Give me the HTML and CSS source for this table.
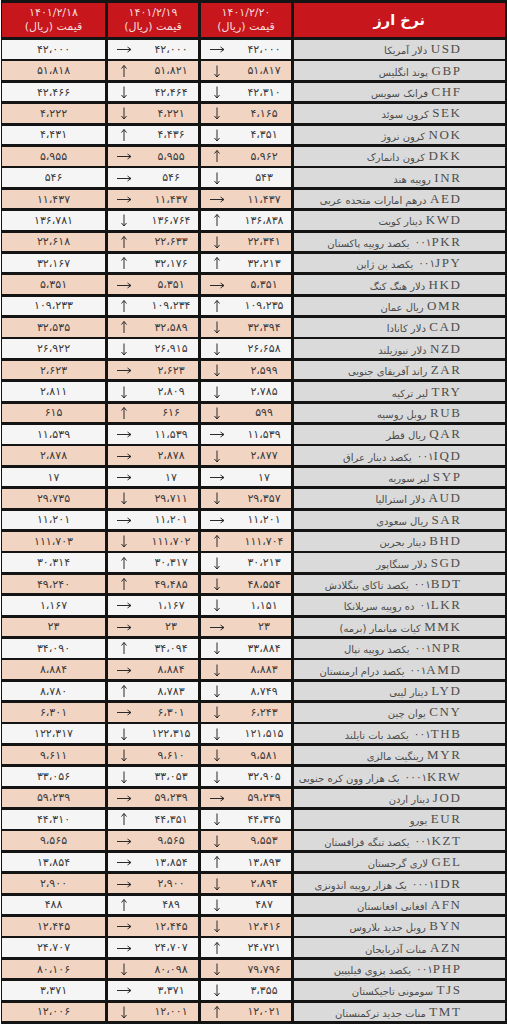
FILE: index.html
```html
<!DOCTYPE html>
<html lang="fa" dir="rtl">
<head>
<meta charset="utf-8">
<title>نرخ ارز</title>
<link rel="stylesheet" href="styles.css">
</head>
<body>
<svg class="defs" width="0" height="0" aria-hidden="true">
  <symbol id="a-r" viewBox="0 0 16 16"><path d="M1 8.5H15M11.5 6L15 8.5L11.5 11"/></symbol>
  <symbol id="a-u" viewBox="0 0 16 16"><path d="M8 14V2.5M5.5 5.5L8 2.5L10.5 5.5"/></symbol>
  <symbol id="a-d" viewBox="0 0 16 16"><path d="M8 2.5V14M5.5 11L8 14L10.5 11"/></symbol>
</svg>
<main class="rates" id="rates">
  <div class="hd hd-name">نرخ ارز</div>
  <div class="hd hd-date"><span class="dt">۱۴۰۱/۲/۲۰</span><span>قیمت (ریال)</span></div>
  <div class="hd hd-date"><span class="dt">۱۴۰۱/۲/۱۹</span><span>قیمت (ریال)</span></div>
  <div class="hd hd-date"><span class="dt">۱۴۰۱/۲/۱۸</span><span>قیمت (ریال)</span></div>
</main>
<script src="app.js"></script>
</body>
</html>
```
FILE: app.js
```javascript
const data = [
  ["USD","","دلار آمریکا","r","۴۲،۰۰۰","r","۴۲،۰۰۰","۴۲،۰۰۰"],
  ["GBP","","پوند انگلیس","d","۵۱،۸۱۷","u","۵۱،۸۲۱","۵۱،۸۱۸"],
  ["CHF","","فرانک سویس","d","۴۲،۳۱۰","d","۴۲،۴۶۴","۴۲،۴۶۶"],
  ["SEK","","کرون سوئد","d","۴،۱۶۵","d","۴،۲۲۱","۴،۲۲۲"],
  ["NOK","","کرون نروژ","d","۴،۳۵۱","u","۴،۴۳۶","۴،۴۳۱"],
  ["DKK","","کرون دانمارک","u","۵،۹۶۲","r","۵،۹۵۵","۵،۹۵۵"],
  ["INR","","روپیه هند","d","۵۴۳","r","۵۴۶","۵۴۶"],
  ["AED","","درهم امارات متحده عربی","r","۱۱،۴۳۷","r","۱۱،۴۳۷","۱۱،۴۳۷"],
  ["KWD","","دینار کویت","u","۱۳۶،۸۳۸","d","۱۳۶،۷۶۴","۱۳۶،۷۸۱"],
  ["PKR","۱۰۰","یکصد روپیه پاکستان","d","۲۲،۳۴۱","u","۲۲،۶۳۳","۲۲،۶۱۸"],
  ["JPY","۱۰۰","یکصد ین ژاپن","u","۳۲،۲۱۳","u","۳۲،۱۷۶","۳۲،۱۶۷"],
  ["HKD","","دلار هنگ کنگ","r","۵،۳۵۱","r","۵،۳۵۱","۵،۳۵۱"],
  ["OMR","","ریال عمان","u","۱۰۹،۲۳۵","u","۱۰۹،۲۳۴","۱۰۹،۲۳۳"],
  ["CAD","","دلار کانادا","d","۳۲،۳۹۴","u","۳۲،۵۸۹","۳۲،۵۳۵"],
  ["NZD","","دلار نیوزیلند","d","۲۶،۶۵۸","d","۲۶،۹۱۵","۲۶،۹۲۲"],
  ["ZAR","","راند آفریقای جنوبی","d","۲،۵۹۹","r","۲،۶۲۳","۲،۶۲۳"],
  ["TRY","","لیر ترکیه","d","۲،۷۸۵","d","۲،۸۰۹","۲،۸۱۱"],
  ["RUB","","روبل روسیه","d","۵۹۹","u","۶۱۶","۶۱۵"],
  ["QAR","","ریال قطر","r","۱۱،۵۳۹","r","۱۱،۵۳۹","۱۱،۵۳۹"],
  ["IQD","۱۰۰","یکصد دینار عراق","d","۲،۸۷۷","r","۲،۸۷۸","۲،۸۷۸"],
  ["SYP","","لیر سوریه","r","۱۷","r","۱۷","۱۷"],
  ["AUD","","دلار استرالیا","d","۲۹،۳۵۷","d","۲۹،۷۱۱","۲۹،۷۳۵"],
  ["SAR","","ریال سعودی","r","۱۱،۲۰۱","r","۱۱،۲۰۱","۱۱،۲۰۱"],
  ["BHD","","دینار بحرین","u","۱۱۱،۷۰۴","d","۱۱۱،۷۰۲","۱۱۱،۷۰۳"],
  ["SGD","","دلار سنگاپور","d","۳۰،۲۱۳","u","۳۰،۳۱۷","۳۰،۳۱۴"],
  ["BDT","۱۰۰","یکصد تاکای بنگلادش","d","۴۸،۵۵۴","u","۴۹،۴۸۵","۴۹،۲۴۰"],
  ["LKR","۱۰","ده روپیه سریلانکا","d","۱،۱۵۱","r","۱،۱۶۷","۱،۱۶۷"],
  ["MMK","","کیات میانمار (برمه)","r","۲۳","r","۲۳","۲۳"],
  ["NPR","۱۰۰","یکصد روپیه نپال","d","۳۳،۸۸۴","u","۳۴،۰۹۴","۳۴،۰۹۰"],
  ["AMD","۱۰۰","یکصد درام ارمنستان","d","۸،۸۸۳","r","۸،۸۸۴","۸،۸۸۴"],
  ["LYD","","دینار لیبی","d","۸،۷۴۹","u","۸،۷۸۳","۸،۷۸۰"],
  ["CNY","","یوان چین","d","۶،۲۴۳","r","۶،۳۰۱","۶،۳۰۱"],
  ["THB","۱۰۰","یکصد بات تایلند","d","۱۲۱،۵۱۵","d","۱۲۲،۳۱۵","۱۲۲،۳۱۷"],
  ["MYR","","رینگیت مالزی","d","۹،۵۸۱","d","۹،۶۱۰","۹،۶۱۱"],
  ["KRW","۱۰۰۰","یک هزار وون کره جنوبی","d","۳۲،۹۰۵","d","۳۳،۰۵۳","۳۳،۰۵۶"],
  ["JOD","","دینار اردن","r","۵۹،۲۳۹","r","۵۹،۲۳۹","۵۹،۲۳۹"],
  ["EUR","","یورو","d","۴۴،۳۴۵","u","۴۴،۳۵۱","۴۴،۳۱۰"],
  ["KZT","۱۰۰","یکصد تنگه قزاقستان","d","۹،۵۵۳","r","۹،۵۶۵","۹،۵۶۵"],
  ["GEL","","لاری گرجستان","u","۱۳،۸۹۳","r","۱۳،۸۵۴","۱۳،۸۵۴"],
  ["IDR","۱۰۰۰","یک هزار روپیه اندونزی","d","۲،۸۹۴","r","۲،۹۰۰","۲،۹۰۰"],
  ["AFN","","افغانی افغانستان","d","۴۸۷","u","۴۸۹","۴۸۸"],
  ["BYN","","روبل جدید بلاروس","d","۱۲،۴۱۶","r","۱۲،۴۴۵","۱۲،۴۴۵"],
  ["AZN","","منات آذربایجان","u","۲۴،۷۲۱","r","۲۴،۷۰۷","۲۴،۷۰۷"],
  ["PHP","۱۰۰","یکصد پزوی فیلیپین","d","۷۹،۷۹۶","d","۸۰،۰۹۸","۸۰،۱۰۶"],
  ["TJS","","سومونی تاجیکستان","d","۳،۳۵۵","r","۳،۳۷۱","۳،۳۷۱"],
  ["TMT","","منات جدید ترکمنستان","u","۱۲،۰۲۱","d","۱۲،۰۰۱","۱۲،۰۰۶"]
];

const root = document.getElementById("rates");
const arrow = (k) =>
  `<span class="arw"><svg class="ic" width="16" height="16"><use href="#a-${k}"/></svg></span>`;

data.forEach((r, i) => {
  const row = document.createElement("div");
  row.className = "row " + (i % 2 ? "pink" : "white");
  row.innerHTML =
    `<div class="c nm"><span class="code">${r[0]}</span>` +
    (r[1] ? `<span class="mult">${r[1]}</span>` : "") +
    `<span class="fa">${r[2]}</span></div>` +
    `<div class="c v">${arrow(r[3])}<span class="num">${r[4]}</span></div>` +
    `<div class="c v">${arrow(r[5])}<span class="num">${r[6]}</span></div>` +
    `<div class="c v solo"><span class="num">${r[7]}</span></div>`;
  root.appendChild(row);
});
```
FILE: styles.css
```css
html, body {
  margin: 0;
  padding: 0;
  background: #ffffff;
}

.defs {
  position: absolute;
  width: 0;
  height: 0;
  overflow: hidden;
}

.rates {
  width: 506px;
  box-sizing: border-box;
  background: #141414;
  display: grid;
  grid-template-columns: 210.5px 90px 90px 103px;
  grid-template-rows: 34.2px;
  grid-auto-rows: 18.6px;
  column-gap: 3px;
  row-gap: 2.8px;
  padding: 3px 2.5px 3px 1px;
  font-family: "DejaVu Sans", sans-serif;
}

.hd {
  background: #c7171d;
  color: #ffffff;
  display: flex;
  align-items: center;
  justify-content: center;
}

.hd-name {
  font-size: 14.5px;
  font-weight: bold;
}

.hd-date {
  flex-direction: column;
  font-size: 11px;
  line-height: 14px;
  color: #f7dede;
}

.hd-date .dt {
  letter-spacing: 1px;
}

.row {
  display: contents;
}

.c {
  display: flex;
  align-items: center;
  overflow: hidden;
  white-space: nowrap;
  color: #3a3a3a;
}

.row.white .v {
  background: #f5f5f5;
}

.row.pink .v {
  background: #f2d4c3;
}

.nm {
  background: #dadada;
  justify-content: flex-start;
  padding-right: 43px;
  color: #4a4a4a;
}

.code {
  font-family: "Liberation Serif", serif;
  font-size: 13px;
  letter-spacing: 1.6px;
  margin-left: -1.6px;
  direction: ltr;
  unicode-bidi: isolate;
  color: #4d4d4d;
}

.mult {
  font-size: 10.5px;
  direction: rtl;
  unicode-bidi: bidi-override;
  letter-spacing: 1px;
  margin-right: 1.5px;
  color: #4d4d4d;
}

.fa {
  font-size: 10px;
  margin-right: 5px;
  padding-top: 3px;
}

.v {
  font-size: 11px;
}

.v .arw {
  order: 2;
  width: 31px;
  flex: none;
  display: flex;
  justify-content: center;
}

.v .num {
  order: 1;
  flex: 1;
  text-align: center;
  padding-left: 5px;
}

.v.solo .num {
  padding-left: 0;
}

.ic {
  display: block;
  fill: none;
  stroke: #2b2b2b;
  stroke-width: 1;
}
```
